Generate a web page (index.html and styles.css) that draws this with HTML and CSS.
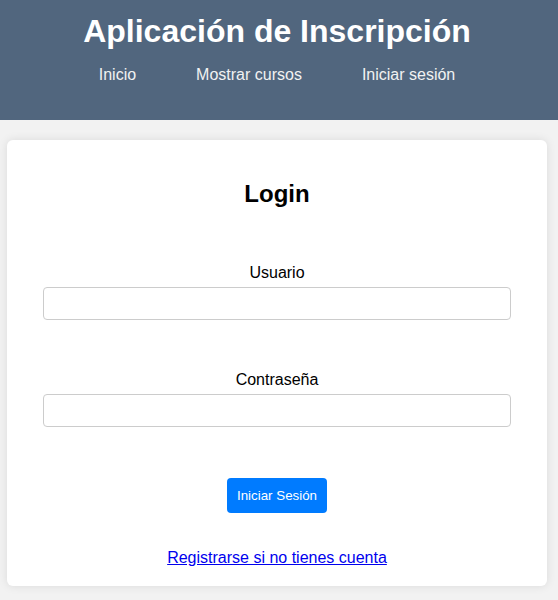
FILE: index.html
```html
<!DOCTYPE html>
<html lang="es">
<head>
<meta charset="utf-8">
<title>Aplicación de Inscripción</title>
<link rel="stylesheet" href="styles.css">
</head>
<body>
<header class="site-header">
  <h1 class="site-title">Aplicación de Inscripción</h1>
  <nav class="site-nav">
    <a href="#" class="nav-link">Inicio</a>
    <a href="#" class="nav-link">Mostrar cursos</a>
    <a href="#" class="nav-link">Iniciar sesión</a>
  </nav>
</header>
<main class="main">
  <section class="card">
    <h2 class="card-title">Login</h2>
    <form class="login-form">
      <div class="form-group">
        <label class="form-label" for="usuario">Usuario</label>
        <input class="form-input" id="usuario" type="text">
      </div>
      <div class="form-group">
        <label class="form-label" for="password">Contraseña</label>
        <input class="form-input" id="password" type="password">
      </div>
      <button class="btn-primary" type="button">Iniciar Sesión</button>
    </form>
    <a href="#" class="register-link">Registrarse si no tienes cuenta</a>
  </section>
</main>
</body>
</html>
```

FILE: styles.css
```css
html, body {
  margin: 0;
  padding: 0;
}
body {
  background: #f2f2f2;
  font-family: "Liberation Sans", Arial, sans-serif;
  color: #000;
}
.site-header {
  background: #51667e;
  height: 120px;
  box-sizing: border-box;
  padding: 13px 4px 0 0;
  text-align: center;
}
.site-title {
  margin: 0;
  font-size: 32px;
  line-height: 37px;
  font-weight: bold;
  color: #fff;
}
.site-nav {
  margin-top: 15px;
  display: flex;
  justify-content: center;
  gap: 60px;
}
.nav-link {
  color: #f2f2f2;
  text-decoration: none;
  font-size: 16px;
  line-height: 19px;
}
.main {
  padding: 20px 11px 20px 7px;
}
.card {
  background: #fff;
  border-radius: 6px;
  box-shadow: 0 0 10px rgba(0, 0, 0, 0.1);
  padding: 20px 20px 19px;
  text-align: center;
  display: flex;
  flex-direction: column;
  align-items: center;
}
.card-title {
  margin: 20px 0 0;
  font-size: 24px;
  line-height: 28px;
  font-weight: bold;
}
.login-form {
  align-self: stretch;
  padding: 0 16px;
  display: flex;
  flex-direction: column;
  align-items: center;
}
.form-group {
  align-self: stretch;
  display: flex;
  flex-direction: column;
  align-items: center;
  margin-top: 56px;
}
.form-group + .form-group {
  margin-top: 51px;
}
.form-label {
  font-size: 16px;
  line-height: 18px;
  margin-bottom: 5px;
}
.form-input {
  align-self: stretch;
  box-sizing: border-box;
  height: 33px;
  border: 1px solid #ccc;
  border-radius: 4px;
  padding: 0 8px;
  font-size: 14px;
  font-family: inherit;
  background: #fff;
}
.btn-primary {
  margin-top: 51px;
  width: 100px;
  height: 35px;
  border: none;
  border-radius: 4px;
  background: #007bff;
  color: #fff;
  font-family: "Liberation Sans", Arial, sans-serif;
  font-size: 13.333px;
  padding: 0;
  cursor: pointer;
}
.register-link {
  margin-top: 36px;
  font-size: 16px;
  line-height: 18px;
  color: #0000ee;
  text-decoration: underline;
}
```
